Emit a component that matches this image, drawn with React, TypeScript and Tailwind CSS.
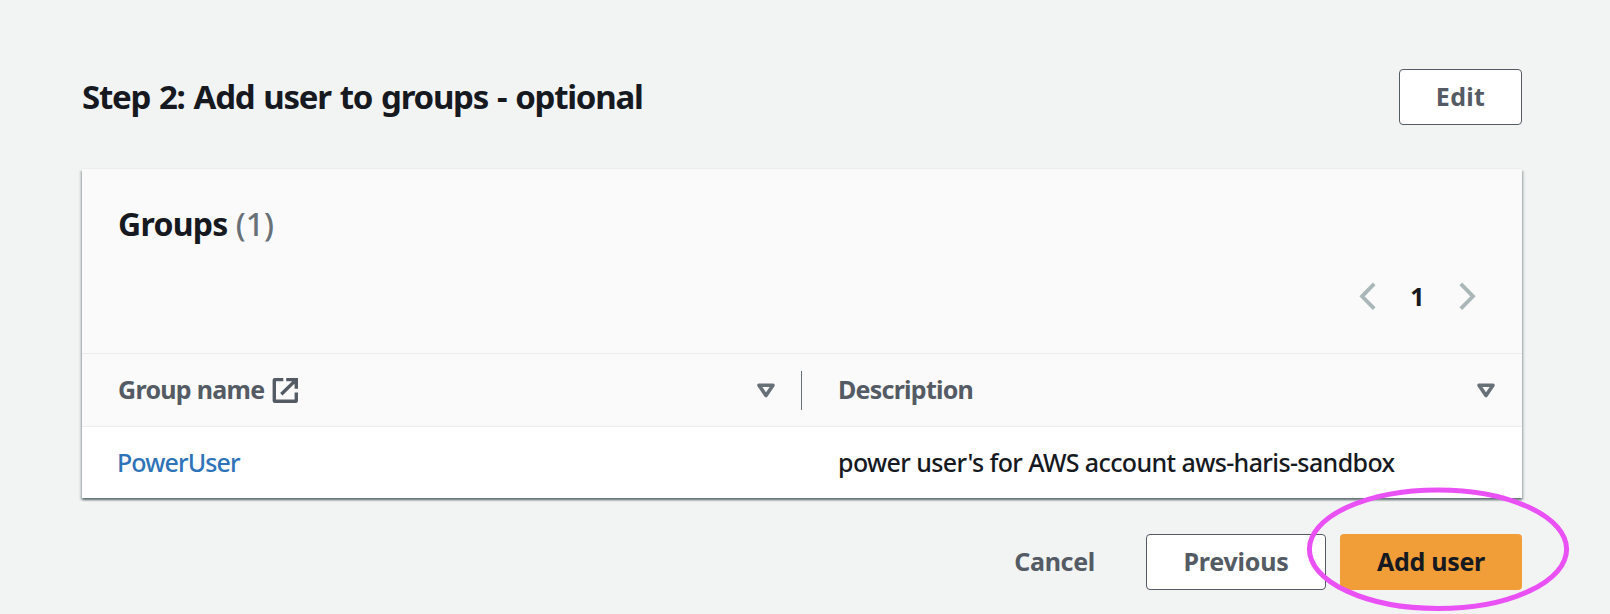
const SortIcon = () => (
  <svg className="h-[17px] w-[20px] shrink-0" viewBox="0 0 20 17" fill="none">
    <path d="M3 3.2h14l-7 10.4z" stroke="#687078" strokeWidth="3.6" strokeLinejoin="round" />
  </svg>
);

const ExternalIcon = () => (
  <svg className="ml-2 h-[27px] w-[27px] shrink-0" viewBox="0 0 27 27" fill="none" stroke="#545b64" strokeWidth="3.4">
    <path d="M11.3 2.6H2.9a.6.6 0 0 0-.6.6v20.5a.6.6 0 0 0 .6.6h20.8a.6.6 0 0 0 .6-.6V15.5" />
    <path d="M14.2 2.6h10.1v9.2M24 2.9 9.3 17.3" />
    <path d="M18 2.6h6.3v6.3z" fill="#545b64" stroke="none" />
  </svg>
);

const Chevron = ({ flip = false }: { flip?: boolean }) => (
  <svg className={flip ? "h-[28px] w-[17px] -scale-x-100" : "h-[28px] w-[17px]"} viewBox="0 0 17 28" fill="none">
    <path d="M15.2 1.9 3 14.3l12.2 12.4" stroke="#aab7b8" strokeWidth="3.8" />
  </svg>
);

export default function App() {
  return (
    <div className="relative h-[614px] w-[1610px] overflow-hidden bg-[#f2f4f3] pt-[69px] pr-[88px] pl-[82px] font-['Noto_Sans',sans-serif] text-[25px] leading-8 text-[#16191f]">
      <header className="flex h-14 items-center justify-between">
        <h1 className="pb-px text-[33px] leading-10 font-bold tracking-[-1.25px] whitespace-nowrap [word-spacing:1.6px]">
          Step 2: Add user to groups - optional
        </h1>
        <button className="flex h-14 w-[123px] items-center justify-center rounded-[4px] border border-[#545b64] bg-white pb-0.5 font-bold tracking-[0.3px] text-[#545b64]">
          Edit
        </button>
      </header>

      <section className="mt-11 h-[329px] bg-white shadow-[0_-1px_0_0_#eaeded,0_2px_2px_0_rgba(0,28,36,0.45),2px_2px_2px_0_rgba(0,28,36,0.15),-2px_2px_2px_0_rgba(0,28,36,0.15)]">
        <div className="h-[185px] border-b border-[#eaeded] bg-[#fafafa] pt-[35px] pr-[46px] pl-9">
          <h2 className="flex text-[32px] leading-10 font-bold tracking-[-0.7px]">
            Groups<span className="ml-2 font-medium tracking-normal text-[#687078]">(1)</span>
          </h2>
          <nav className="mt-9 flex h-8 items-center justify-end">
            <Chevron />
            <span className="w-[83px] pb-px text-center font-bold">1</span>
            <Chevron flip />
          </nav>
        </div>

        <div className="grid h-[73px] grid-cols-2 border-b border-[#eaeded] bg-[#fafafa] font-bold text-[#545b64]">
          <div className="flex items-center justify-between pl-9">
            <span className="flex items-center tracking-[-0.7px] whitespace-nowrap">
              <span className="pb-[3px]">Group name</span>
              <ExternalIcon />
            </span>
            <span className="flex items-center">
              <SortIcon />
              <span className="ml-[25px] h-[39px] w-px bg-[#687078]" />
            </span>
          </div>
          <div className="flex items-center justify-between pr-[26px] pl-9">
            <span className="pb-0.5 tracking-[-0.75px]">Description</span>
            <SortIcon />
          </div>
        </div>

        <div className="grid h-[71px] grid-cols-2 items-center pb-0.5 font-medium">
          <a className="pl-[35px] tracking-[-0.9px] text-[#2e73b8]">PowerUser</a>
          <span className="pl-9 tracking-[-0.62px] whitespace-nowrap">
            power user's for AWS account aws-haris-sandbox
          </span>
        </div>
      </section>

      <footer className="mt-9 flex h-14 items-center justify-end font-bold">
        <button className="mr-[51px] pb-0.5 tracking-[-0.3px] text-[#545b64]">Cancel</button>
        <button className="h-14 w-[180px] rounded-[4px] border border-[#545b64] bg-white pb-0.5 tracking-[-0.2px] text-[#545b64]">
          Previous
        </button>
        <button className="ml-3.5 h-14 w-[182px] rounded-[4px] bg-[#f19e38] pb-0.5 tracking-[-0.3px]">Add user</button>
      </footer>

      <svg className="pointer-events-none absolute top-[485px] left-[1305px] h-[129px] w-[266px]" viewBox="0 0 266 129" fill="none">
        <ellipse cx="133" cy="64.2" rx="128.6" ry="59.3" stroke="#ea51f5" strokeWidth="5" />
      </svg>
    </div>
  );
}
